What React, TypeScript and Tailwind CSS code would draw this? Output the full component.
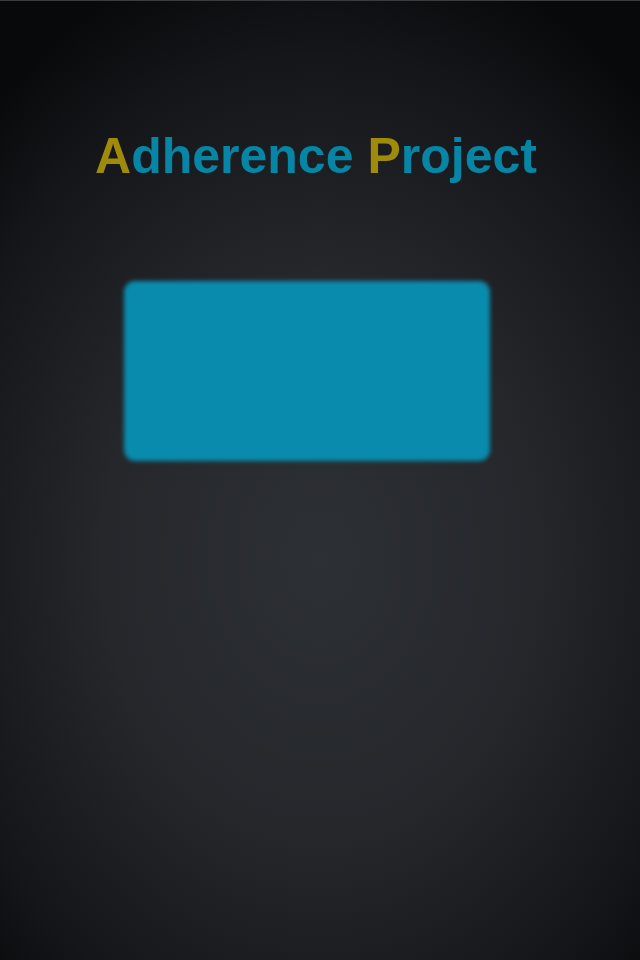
export default function App() {
  return (
    <div className="min-h-[960px] w-full border-t border-[#3b3c3f] bg-[radial-gradient(ellipse_75%_65%_at_50%_58%,#2d3035_0%,#25272b_45%,#15161a_80%,#08090a_100%)] font-['Liberation_Sans',Arial,sans-serif]">
      <div className="flex flex-col items-center pt-[130px]">
        <h1 className="ml-[-8px] text-[50px] font-bold leading-[50px] text-[#0785a5]">
          <span className="text-[#a08a09]">A</span>dherence{" "}
          <span className="text-[#a08a09]">P</span>roject
        </h1>
        <div className="mt-[100px] ml-[-27px] h-[180px] w-[366px] rounded-[11px] bg-[#098bad] blur-[2px]" />
      </div>
    </div>
  );
}
